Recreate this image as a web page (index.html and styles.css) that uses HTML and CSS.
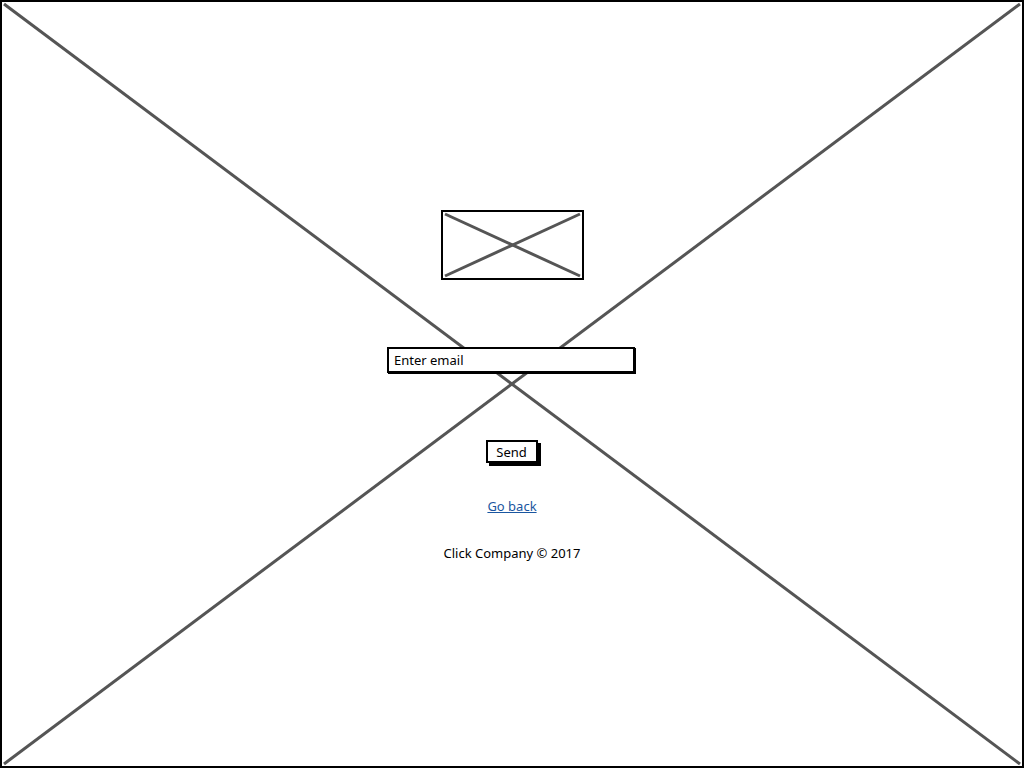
FILE: index.html
```html
<!DOCTYPE html>
<html>

<head>
    <title>Forgot password</title>
    <link rel="stylesheet" href="styles.css">
</head>

<body>
    <div class="frame">
        <svg class="frame-cross" width="1020" height="764" viewBox="0 0 1020 764">
            <line x1="2" y1="2" x2="1018" y2="762" />
            <line x1="1018" y1="2" x2="2" y2="762" />
        </svg>

        <div class="content">
            <div class="logo">
                <svg width="139" height="66" viewBox="0 0 139 66">
                    <line x1="2" y1="2" x2="137" y2="64" />
                    <line x1="137" y1="2" x2="2" y2="64" />
                </svg>
            </div>

            <div class="email-box">Enter email</div>

            <button class="send-button">Send</button>

            <a class="back-link" href="#">Go back</a>

            <p class="footer">Click Company &copy; 2017</p>
        </div>
    </div>
</body>

</html>
```

FILE: styles.css
```css
body {
    margin: 0;
    font-family: 'Noto Sans', 'DejaVu Sans', sans-serif;
    background-color: #fff;
}

.frame {
    position: relative;
    width: 1024px;
    height: 768px;
    box-sizing: border-box;
    border: 2px solid #000;
    overflow: hidden;
}

.frame-cross {
    position: absolute;
    top: 0;
    left: 0;
}

.frame-cross line,
.logo line {
    stroke: #555;
    stroke-width: 3;
}

.content {
    position: relative;
    display: flex;
    flex-direction: column;
    align-items: center;
    padding-top: 208px;
}

.logo {
    width: 143px;
    height: 70px;
    box-sizing: border-box;
    border: 2px solid #000;
    background-color: #fff;
    margin-left: 1px;
}

.logo svg {
    display: block;
}

.email-box {
    margin-top: 67px;
    width: 248px;
    height: 26px;
    box-sizing: border-box;
    border: 2px solid #000;
    box-shadow: 1px 1px 0 #000;
    background-color: #fff;
    padding: 1px 5px;
    font-size: 13px;
    line-height: 20px;
    color: #000;
    align-self: flex-start;
    margin-left: 385px;
}

.send-button {
    margin-top: 67px;
    width: 52px;
    height: 23px;
    box-sizing: border-box;
    border: 2px solid #000;
    box-shadow: 3px 3px 0 #000;
    background-color: #fff;
    font-family: inherit;
    font-size: 13px;
    padding: 0;
    line-height: 18px;
    color: #000;
    margin-right: 1px;
}

.back-link {
    margin-top: 34px;
    font-size: 13px;
    color: #1a56a0;
    text-decoration: underline;
}

.footer {
    margin: 29px 0 0;
    font-size: 13px;
    color: #000;
}
```
